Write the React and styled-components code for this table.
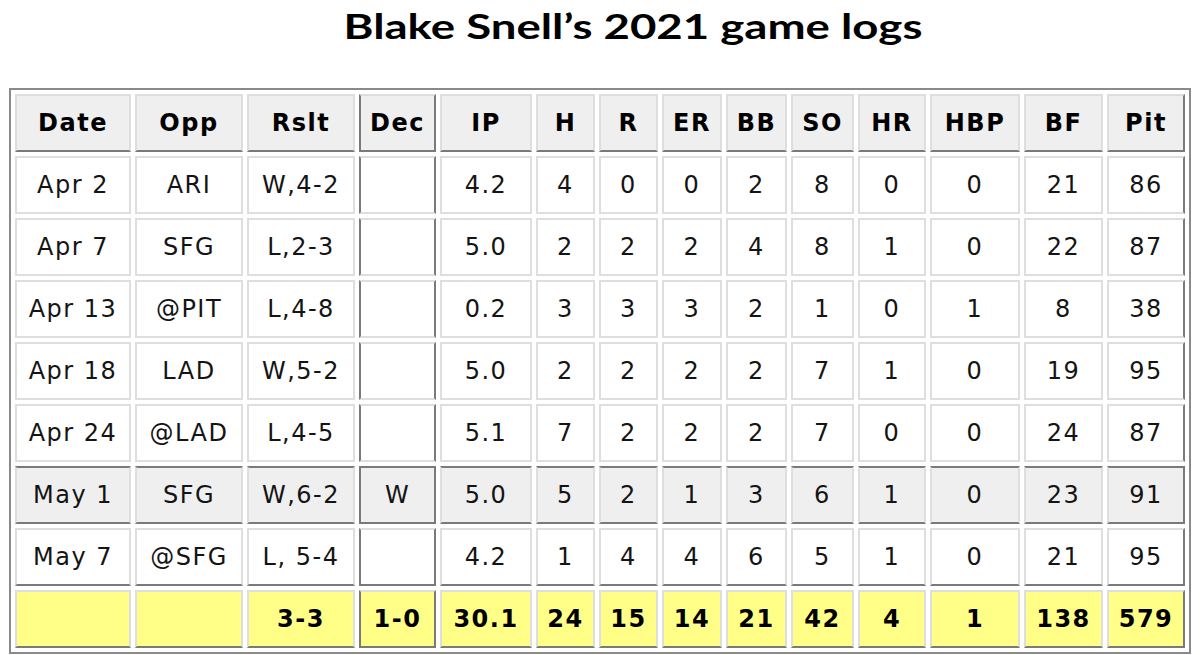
import React from 'react';
import styled, { createGlobalStyle, css } from 'styled-components';

const GlobalStyle = createGlobalStyle`
  html, body {
    margin: 0;
    padding: 0;
    background: #fff;
  }
  body {
    font-family: "DejaVu Sans", Verdana, sans-serif;
  }
`;

const Page = styled.div`
  width: 1200px;
  height: 655px;
  overflow: hidden;
  background: #fff;
`;

const Title = styled.h1`
  margin: 0;
  padding: 6px 0 0 66px;
  height: 80px;
  box-sizing: border-box;
  text-align: center;
  font-family: Lato, "Open Sans", sans-serif;
  font-weight: 700;
  font-size: 34px;
  line-height: 40px;
  color: #000;
`;

// the source picture is stretched sideways, so the heading is too
const TitleText = styled.span`
  display: inline-block;
  transform: scaleX(1.34);
`;

const Table = styled.table`
  margin: 8px 0 0 9px;
  border: 2px solid #8a8a8a;
  border-spacing: 4px;
  table-layout: fixed;
  font-size: 24px;
  letter-spacing: 1.5px;
`;

const dark = '#7a7a7a';
const light = '#dedede';

const cellBase = css`
  height: 58px;
  padding: 0;
  box-sizing: border-box;
  text-align: center;
  vertical-align: middle;
  border: 2px solid ${light};
  white-space: nowrap;
  ${({ $divider }) => $divider && css`
    border-left-color: ${dark};
    border-right-color: ${dark};
  `}
  ${({ $last }) => $last && css`
    border-right-color: ${dark};
  `}
`;

const Th = styled.th`
  ${cellBase}
  background: #efefef;
  border-bottom-color: ${dark};
  font-weight: 700;
  color: #000;
`;

const Td = styled.td`
  ${cellBase}
  color: #141414;
  background: ${({ $tone }) => ($tone === 'grey' ? '#efefef' : $tone === 'total' ? '#ffff88' : '#fff')};
  ${({ $tone }) => $tone === 'grey' && css`
    border-top-color: ${dark};
    border-bottom-color: ${dark};
  `}
  ${({ $tone }) => $tone === 'total' && css`
    font-weight: 700;
    color: #000;
    border-bottom-color: ${dark};
  `}
  ${({ $bottomDark }) => $bottomDark && css`
    border-bottom-color: ${dark};
  `}
`;

const columns = [
  { key: 'Date', width: 116 },
  { key: 'Opp', width: 108 },
  { key: 'Rslt', width: 108 },
  { key: 'Dec', width: 77 },
  { key: 'IP', width: 92 },
  { key: 'H', width: 59 },
  { key: 'R', width: 59 },
  { key: 'ER', width: 60 },
  { key: 'BB', width: 61 },
  { key: 'SO', width: 63 },
  { key: 'HR', width: 68 },
  { key: 'HBP', width: 90 },
  { key: 'BF', width: 79 },
  { key: 'Pit', width: 78 },
];

const games = [
  ['Apr 2', 'ARI', 'W,4-2', '', '4.2', '4', '0', '0', '2', '8', '0', '0', '21', '86'],
  ['Apr 7', 'SFG', 'L,2-3', '', '5.0', '2', '2', '2', '4', '8', '1', '0', '22', '87'],
  ['Apr 13', '@PIT', 'L,4-8', '', '0.2', '3', '3', '3', '2', '1', '0', '1', '8', '38'],
  ['Apr 18', 'LAD', 'W,5-2', '', '5.0', '2', '2', '2', '2', '7', '1', '0', '19', '95'],
  ['Apr 24', '@LAD', 'L,4-5', '', '5.1', '7', '2', '2', '2', '7', '0', '0', '24', '87'],
  ['May 1', 'SFG', 'W,6-2', 'W', '5.0', '5', '2', '1', '3', '6', '1', '0', '23', '91'],
  ['May 7', '@SFG', 'L, 5-4', '', '4.2', '1', '4', '4', '6', '5', '1', '0', '21', '95'],
];

const totals = ['', '', '3-3', '1-0', '30.1', '24', '15', '14', '21', '42', '4', '1', '138', '579'];

export default function App() {
  return (
    <Page>
      <GlobalStyle />
      <Title>
        <TitleText>Blake Snell’s 2021 game logs</TitleText>
      </Title>
      <Table>
        <colgroup>
          {columns.map((c) => (
            <col key={c.key} style={{ width: c.width }} />
          ))}
        </colgroup>
        <thead>
          <tr>
            {columns.map((c, i) => (
              <Th key={c.key} $divider={i === 3} $last={i === columns.length - 1}>
                {c.key}
              </Th>
            ))}
          </tr>
        </thead>
        <tbody>
          {games.map((row, r) => (
            <tr key={row[0]}>
              {row.map((v, i) => (
                <Td
                  key={i}
                  $tone={row[0] === 'May 1' ? 'grey' : undefined}
                  $bottomDark={r === games.length - 1}
                  $divider={i === 3}
                  $last={i === row.length - 1}
                >
                  {v}
                </Td>
              ))}
            </tr>
          ))}
          <tr>
            {totals.map((v, i) => (
              <Td key={i} $tone="total" $divider={i === 3} $last={i === totals.length - 1}>
                {v}
              </Td>
            ))}
          </tr>
        </tbody>
      </Table>
    </Page>
  );
}
